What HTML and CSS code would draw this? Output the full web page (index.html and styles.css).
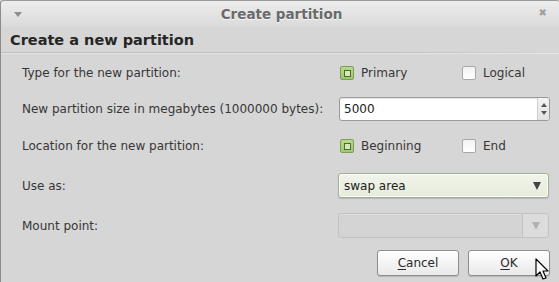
FILE: index.html
```html
<!DOCTYPE html>
<html lang="en">
<head>
  <meta charset="UTF-8" />
  <title>Create partition</title>
  <link rel="stylesheet" href="styles.css">
</head>
<body>
  <div class="window">
    <div class="titlebar">
      <span class="menu-arrow"></span>
      <span class="title">Create partition</span>
      <span class="close">&#x2716;</span>
    </div>

    <div class="content">
      <h1>Create a new partition</h1>
      <div class="separator"></div>

      <div class="form">
        <div class="row row-type">
          <span class="label">Type for the new partition:</span>
          <div class="options">
            <label class="option"><span class="check checked"><span class="dot"></span></span>Primary</label>
            <label class="option"><span class="check"></span>Logical</label>
          </div>
        </div>

        <div class="row row-size">
          <span class="label">New partition size in megabytes (1000000 bytes):</span>
          <div class="spin">
            <span class="spin-value">5000</span>
            <span class="spin-arrows">
              <span class="tri up"></span>
              <span class="tri down"></span>
            </span>
          </div>
        </div>

        <div class="row row-location">
          <span class="label">Location for the new partition:</span>
          <div class="options">
            <label class="option"><span class="check checked"><span class="dot"></span></span>Beginning</label>
            <label class="option"><span class="check"></span>End</label>
          </div>
        </div>

        <div class="row row-use">
          <span class="label">Use as:</span>
          <div class="combo">
            <span class="combo-value">swap area</span>
            <span class="tri down big"></span>
          </div>
        </div>

        <div class="row row-mount">
          <span class="label">Mount point:</span>
          <div class="combo disabled">
            <span class="combo-value"></span>
            <span class="combo-btn"><span class="tri down big"></span></span>
          </div>
        </div>

        <div class="buttons">
          <button class="btn"><u>C</u>ancel</button>
          <button class="btn"><u>O</u>K</button>
        </div>
      </div>
    </div>

    <svg class="cursor" width="14" height="24" viewBox="0 0 14 24">
      <path d="M1 1 L1 18 L5 14 L8 21 L11 20 L8 13 L13 13 Z" fill="#fff" stroke="#000" stroke-width="1.2" stroke-linejoin="round"/>
    </svg>
  </div>
</body>
</html>
```

FILE: styles.css
```css
body {
  margin: 0;
  padding: 0;
  background: #d6d6d6;
  font-family: 'DejaVu Sans', sans-serif;
  font-size: 12px;
  color: #363636;
  overflow: hidden;
}
.window {
  position: relative;
  width: 560px;
  height: 282px;
  border-left: 1px solid #8c8c8c;
  border-top: 1px solid #9a9a9a;
  border-radius: 4px 4px 0 0;
  background: #d6d6d6;
  box-sizing: border-box;
}

/* title bar */
.titlebar {
  height: 26px;
  display: flex;
  align-items: center;
  justify-content: center;
  position: relative;
  background: linear-gradient(to bottom, #ededed, #dadada);
  border-radius: 4px 4px 0 0;
}
.menu-arrow {
  position: absolute;
  left: 13px;
  top: 11px;
  width: 0;
  height: 0;
  border-left: 4px solid transparent;
  border-right: 4px solid transparent;
  border-top: 5px solid #8e8e8e;
}
.title {
  font-weight: bold;
  font-size: 13.5px;
  color: #6a6a6a;
  text-shadow: 0 1px 0 #f6f6f6;
  margin-left: 2px;
}
.close {
  position: absolute;
  right: 13px;
  top: 6px;
  font-size: 10px;
  color: #a0a0a0;
}

.content {
  padding: 0 9px;
}
h1 {
  font-size: 14.5px;
  font-weight: bold;
  color: #262626;
  margin: 0;
  padding-top: 5px;
  height: 20px;
}
.separator {
  height: 1px;
  margin: 0 -9px;
  background: linear-gradient(to right, #bdbdbd 70%, #d6d6d6);
  border-bottom: 1px solid #e6e6e6;
}

.form {
  padding-left: 12px;
}
.row {
  display: flex;
  align-items: center;
  height: 24px;
}
.row-type { margin-top: 7px; }
.row-size { margin-top: 12px; }
.row-location { margin-top: 13px; }
.row-use { margin-top: 15px; height: 25px; }
.row-mount { margin-top: 15px; height: 25px; }

.label {
  width: 316px;
  flex: none;
}

/* check-style radios */
.options {
  display: flex;
  padding-left: 2px;
}
.option {
  display: flex;
  align-items: center;
  width: 122px;
}
.check {
  width: 12px;
  height: 12px;
  border: 1px solid #a8a8a8;
  border-radius: 2px;
  background: linear-gradient(to bottom, #f2f2f2, #ffffff);
  margin-right: 7px;
  display: flex;
  align-items: center;
  justify-content: center;
}
.check.checked {
  border-color: #7e9c56;
  background: linear-gradient(to bottom, #b9d98e, #9fc86d);
}
.dot {
  width: 5px;
  height: 5px;
  border: 1px solid #4e6a2c;
  background: #d4e8b9;
}

/* spin button */
.spin {
  width: 209px;
  height: 22px;
  border: 1px solid #9a9a9a;
  border-radius: 3px;
  background: #fff;
  display: flex;
  align-items: center;
  box-shadow: inset 0 1px 1px rgba(0, 0, 0, 0.1);
  margin-left: 1px;
}
.spin-value {
  flex: 1;
  padding-left: 4px;
  color: #222;
}
.spin-arrows {
  width: 11px;
  height: 22px;
  border-left: 1px solid #cfcfcf;
  background: linear-gradient(to bottom, #f4f4f4, #e2e2e2);
  border-radius: 0 3px 3px 0;
  display: flex;
  flex-direction: column;
  align-items: center;
  justify-content: center;
  gap: 4px;
}
.tri {
  width: 0;
  height: 0;
  border-left: 3px solid transparent;
  border-right: 3px solid transparent;
}
.tri.up { border-bottom: 4px solid #555; }
.tri.down { border-top: 4px solid #555; }
.tri.big {
  border-left-width: 4px;
  border-right-width: 4px;
  border-top-width: 8px;
}

/* combo boxes */
.combo {
  width: 209px;
  height: 23px;
  border: 1px solid #a4ad96;
  border-radius: 3px;
  background: linear-gradient(to bottom, #f0f4ea, #e6ecdc);
  box-shadow: 0 1px 1px rgba(0, 0, 0, 0.15), inset 0 0 0 1px #fbfdf8;
  display: flex;
  align-items: center;
}
.combo-value {
  flex: 1;
  padding-left: 5px;
  color: #222;
}
.combo .tri.big {
  margin-right: 7px;
  border-top-color: #444;
}
.combo.disabled {
  border-color: #c2c2c2;
  background: #d4d4d4;
  box-shadow: inset 0 1px 0 #dedede;
}
.combo-btn {
  width: 25px;
  height: 23px;
  border-left: 1px solid #c2c2c2;
  display: flex;
  align-items: center;
  justify-content: center;
  background: #dcdcdc;
  border-radius: 0 3px 3px 0;
}
.combo.disabled .tri.big {
  margin: 0;
  border-top-color: #b2b2b2;
}

/* dialog buttons */
.buttons {
  display: flex;
  justify-content: flex-end;
  gap: 9px;
  margin-top: 12px;
  padding-right: 1px;
}
.btn {
  width: 82px;
  height: 26px;
  font-family: 'DejaVu Sans', sans-serif;
  font-size: 12px;
  color: #2a2a2a;
  border: 1px solid #8e8e8e;
  border-radius: 3px;
  background: linear-gradient(to bottom, #ffffff, #e9e9e9);
  box-shadow: 0 1px 1px rgba(0, 0, 0, 0.15);
  padding: 0;
}
.btn u {
  text-decoration-thickness: 1px;
  text-underline-offset: 2px;
}

.cursor {
  position: absolute;
  left: 534px;
  top: 257px;
}
```
